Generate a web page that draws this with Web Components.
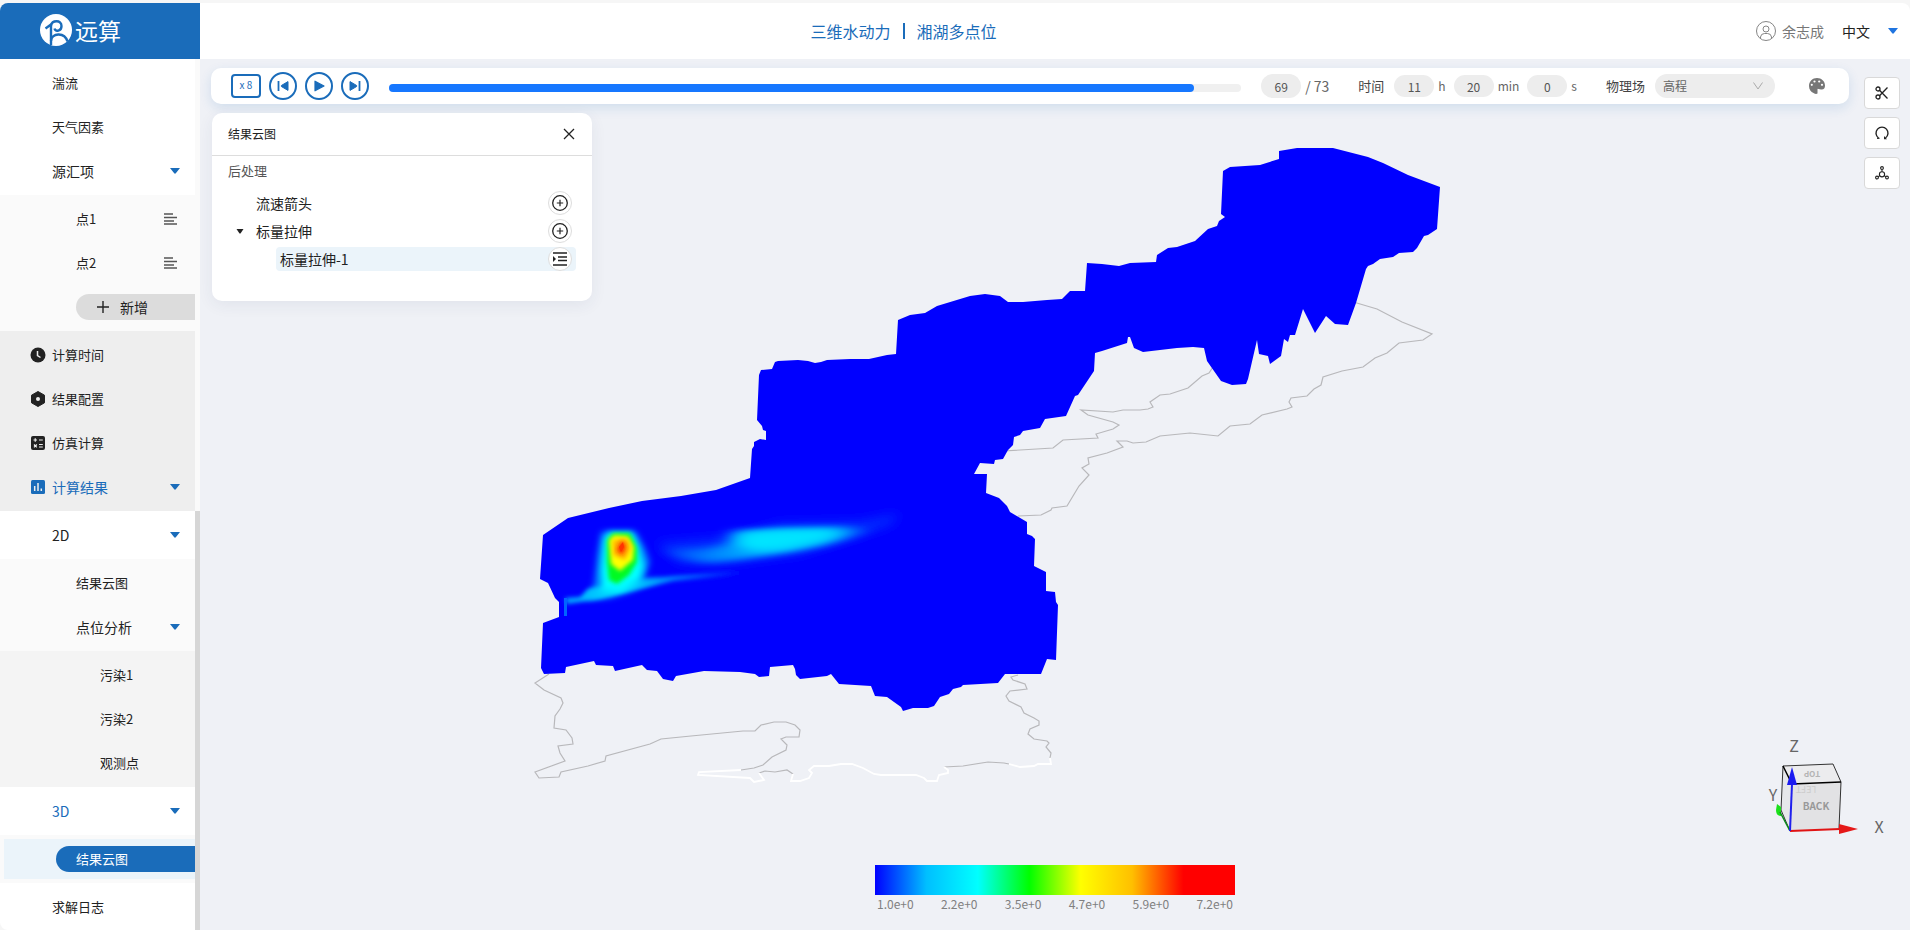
<!DOCTYPE html>
<html lang="zh-CN">
<head>
<meta charset="utf-8">
<title>三维水动力 | 湘湖多点位</title>
<style>
  html, body { margin: 0; height: 100%; }
  body {
    background: #f6f6f6; color: #222;
    font: 14px/20px "Noto Sans CJK SC", "Noto Sans", sans-serif;
    --brand: #1a6cba; --stage: #eff1f6; --tint: #ebf4fa; --pill: #ededed;
  }
</style>
</head>
<body>
<sim-app></sim-app>
<script>
const base = `
  :host, *, *::before, *::after { box-sizing: border-box; }
  button, input, select { font: inherit; color: inherit; margin: 0; padding: 0; border: 0; background: none; }
  button, select { cursor: pointer; }
  select { appearance: none; }
  a { color: inherit; text-decoration: none; }
  svg { display: block; }
`;
function define(name, html) {
  customElements.define(name, class extends HTMLElement {
    constructor() {
      super();
      this.attachShadow({ mode: 'open' });
    }
    connectedCallback() {
      if (this.shadowRoot.childNodes.length) return;
      const template = document.createElement('template');
      template.innerHTML = '<style>' + base + '</style>' + (typeof html === 'function' ? html(this) : html);
      this.shadowRoot.append(template.content.cloneNode(true));
    }
  });
}

/* ---------- icons ---------- */
const icons = {
  caret: ['0 0 10 6', '<path d="M0 0H10L6 5Q5 6.500 4 5Z" fill="currentColor"/>'],
  list: ['0 0 14 12', '<path d="M0 1H9M0 4.500H13M0 8H10M0 11H13" stroke="currentColor" stroke-width="1.300"/>'],
  plus: ['0 0 12 12', '<path d="M6 0V12M0 6H12" stroke="currentColor" stroke-width="1.400"/>'],
  close: ['0 0 12 12', '<path d="M1 1L11 11M11 1L1 11" stroke="currentColor" stroke-width="1.300"/>'],
  clock: ['0 0 16 16', '<circle cx="8" cy="8" r="7.500" fill="currentColor"/><path d="M7.500 4V8.500L10.500 10.500" fill="none" stroke="#eee" stroke-width="1.500"/>'],
  nut: ['0 0 16 16', '<path d="M8 .5L14.500 4.200V11.800L8 15.500L1.500 11.800V4.200Z" fill="currentColor" stroke="currentColor" stroke-linejoin="round"/><circle cx="8" cy="8" r="2" fill="#eee"/>'],
  calc: ['0 0 16 16', '<rect x="1" y="1" width="14" height="14" rx="2" fill="currentColor"/><path d="M3.500 5H7M5.250 3.300V6.700M9 5H12.800M9 9.500H12.800M9 12H12.800M4 9.500L6.800 12.300M6.800 9.500L4 12.300" stroke="#eee" stroke-width="1.200"/>'],
  chart: ['0 0 16 16', '<rect x="1" y="1" width="14" height="14" rx="1.500" fill="currentColor"/><path d="M4.700 7V12M8 4V12M11.300 9.500V12" stroke="#eee" stroke-width="1.500"/>'],
  prev: ['0 0 12 12', '<path d="M1.500 1V11" stroke="currentColor" stroke-width="1.800"/><path d="M11 1.600V10.400L4.500 6.600Q3.500 6 4.500 5.400Z" fill="currentColor" stroke="currentColor" stroke-linejoin="round"/>'],
  play: ['0 0 12 12', '<path d="M2 1.200L11 6L2 10.800Z" fill="currentColor" stroke="currentColor" stroke-width="1.200" stroke-linejoin="round"/>'],
  next: ['0 0 12 12', '<path d="M10.500 1V11" stroke="currentColor" stroke-width="1.800"/><path d="M1 1.600V10.400L7.500 6.600Q8.500 6 7.500 5.400Z" fill="currentColor" stroke="currentColor" stroke-linejoin="round"/>'],
  user: ['0 0 20 20', '<g fill="none" stroke="currentColor" stroke-width=".9"><circle cx="10" cy="10" r="9.500"/><circle cx="10" cy="8" r="3"/><path d="M4.500 17V16Q5 12.500 8.500 12.500H11.500Q15 12.500 15.500 16V17"/></g>'],
  add: ['0 0 16 16', '<circle cx="8" cy="8" r="7.300" fill="none" stroke="currentColor" stroke-width="1.300"/><path d="M8 4.800V11.200M4.800 8H11.200" stroke="currentColor" stroke-width="1.200"/>'],
  indent: ['0 0 16 16', '<path d="M1 2H15M6 6H15M6 9.500H15M1 14H15" stroke="currentColor" stroke-width="1.300"/><path d="M1 5L4 8L1 11Z" fill="currentColor"/>'],
  chevron: ['0 0 10 8', '<path d="M.5 .5L5 7L9.500 .5" fill="none" stroke="currentColor"/>'],
  palette: ['0 0 16 16', '<path d="M8 0C3.500 0 0 3.500 0 8C0 11.500 2 14 4.500 15Q7 16.500 8.500 15.500V11.500Q8.500 10.500 9.500 11L12 11.500Q16 12 16 7.500C16 3.300 12.500 0 8 0Z" fill="currentColor"/><g fill="#fff"><circle cx="2.800" cy="6.800" r="1.100"/><circle cx="5.500" cy="3.500" r="1.100"/><circle cx="10.200" cy="3.500" r="1.100"/><circle cx="13" cy="6.800" r="1.100"/></g>'],
  cut: ['0 0 14 14', '<g fill="none" stroke="currentColor" stroke-width="1.300"><circle cx="3" cy="3" r="2"/><circle cx="3" cy="11" r="2"/><path d="M4.500 4.300L12.500 12.500M4.500 9.700L12.500 1.500"/></g>'],
  rotate: ['0 0 14 14', '<path d="M3.500 12A6 6 0 1 1 10.500 12" fill="none" stroke="currentColor" stroke-width="1.400"/><path d="M9 10V13.300H12Z" fill="currentColor"/><path d="M2 12.300H4.500" fill="none" stroke="currentColor" stroke-width="1.200"/>'],
  nodes: ['0 0 14 14', '<g fill="none" stroke="currentColor" stroke-width="1.100"><circle cx="7" cy="8.300" r="2.600"/><circle cx="7" cy="2" r="1.400"/><circle cx="2" cy="11.500" r="1.400"/><circle cx="12" cy="11.500" r="1.400"/><path d="M7 3.400V5.700M3.200 10.700L4.800 9.600M10.800 10.700L9.200 9.600"/></g>'],
};
define('ui-icon', el => {
  const [box, body] = icons[el.getAttribute('name')];
  const [, , w, h] = box.split(' ');
  return `<style>:host { display: block; flex: none; }</style>
  <svg viewBox="${box}" width="${w}" height="${h}" aria-hidden="true">${body}</svg>`;
});

/* ---------- header ---------- */
define('brand-logo', `
<style>
  :host { display: flex; align-items: center; gap: 3px; width: 200px; height: 56px; padding: 0 0 2px 40px; background: var(--brand); color: #fff; font-size: 23px; line-height: 30px; }
</style>
<svg width="32" height="32" viewBox="0 0 32 32" aria-hidden="true">
  <circle cx="16" cy="16" r="16" fill="#fff"/>
  <g fill="none" stroke="#1a6cba" stroke-width="2.400" stroke-linejoin="round">
    <path d="M5.500 14.500L11 10.500V31"/>
    <path d="M11 11.500C12 6 21.500 5.500 21.500 12C21.500 17.500 15.500 18 14.500 14.500"/>
    <path d="M11 27C11.500 19 24.500 17.500 27.500 27.500"/>
  </g>
</svg>
<span>远算</span>`);

define('app-header', `
<style>
  :host { display: flex; align-items: center; height: 56px; padding-bottom: 1px; background: #fff; }
  h1 { flex: 1; margin: 0; display: flex; justify-content: center; gap: 12px; font-size: 16px; line-height: 24px; font-weight: 400; color: var(--brand); }
  .bar { width: 2px; height: 16px; align-self: center; background: var(--brand); }
  .right { flex: 0 0 303px; display: flex; justify-content: flex-end; align-items: center; padding-right: 12px; }
  .user { display: flex; align-items: center; gap: 6px; color: #777; margin-right: 18px; }
  label { display: grid; align-items: center; }
  label > * { grid-area: 1 / 1; }
  select { width: 56px; color: #222; }
  label ui-icon { justify-self: end; color: #1f74e0; pointer-events: none; }
</style>
<h1><span>三维水动力</span><i class="bar"></i><span>湘湖多点位</span></h1>
<div class="right">
  <a class="user" href="#user"><ui-icon name="user"></ui-icon><span>余志成</span></a>
  <label><select aria-label="语言"><option>中文</option></select><ui-icon name="caret"></ui-icon></label>
</div>`);

/* ---------- side menu ---------- */
define('menu-section', `
<style>
  :host { display: flow-root; }
  :host([tone="head"]) { background: #eee; }
  :host([tone="sub"]) { background: #fafafa; }
  :host([tone="deep"]) { background: #f4f4f4; }
</style><slot></slot>`);

define('menu-item', el => {
  const open = el.hasAttribute('expandable');
  const tag = open ? 'button' : 'a';
  return `
<style>
  :host { display: block; height: 40px; margin: 4px 0; font-size: 13px; }
  :host([expandable]) { font-size: 14px; }
  :host([current]) { color: var(--brand); }
  .row { display: flex; align-items: center; gap: 6px; width: 100%; height: 40px; padding: 0 15px 0 30px; text-align: left; }
  :host([level="2"]) .row { padding-left: 54px; }
  :host([level="3"]) .row { padding-left: 78px; }
  .icon { width: 16px; flex: none; }
  .label { flex: 1; }
  .caret { color: var(--brand); }
  .more { color: #555; padding-right: 2px; }
  :host([selected]) { margin-left: 4px; background: var(--tint); color: #fff; }
  :host([selected]) .row { padding: 7px 0 7px 52px; }
  :host([selected]) .icon { display: none; }
  :host([selected]) .label { height: 26px; line-height: 26px; padding-left: 20px; border-radius: 13px 0 0 13px; background: var(--brand); }
</style>
<${tag} class="row" ${open ? 'type="button" aria-expanded="true"' : 'href="#"'}>
  <span class="icon"><slot name="icon"></slot></span>
  <span class="label"><slot></slot></span>
  ${open ? '<ui-icon class="caret" name="caret"></ui-icon>' : ''}
  ${el.hasAttribute('more') ? '<ui-icon class="more" name="list"></ui-icon>' : ''}
</${tag}>`;
});

define('menu-add', `
<style>
  :host { display: block; height: 40px; margin: 4px 0; padding: 7px 0 7px 76px; }
  button { display: flex; align-items: center; gap: 11px; width: 100%; height: 26px; padding-left: 21px; border-radius: 13px 0 0 13px; background: #dcdcdc; }
</style>
<button type="button"><ui-icon name="plus"></ui-icon><span><slot></slot></span></button>`);

define('side-menu', `
<style>
  :host { display: flex; width: 200px; min-height: 0; overflow: hidden; background: #fff; border-radius: 0 0 0 8px; }
  nav { flex: 1; min-width: 0; }
  .track { width: 5px; display: grid; grid-template-rows: 452fr 419fr; background: #fafafa; }
  .track i { grid-row: 2; background: #d6d6d6; }
</style>
<nav>
  <menu-section>
    <menu-item>湍流</menu-item>
    <menu-item>天气因素</menu-item>
    <menu-item expandable>源汇项</menu-item>
    <menu-section tone="sub">
      <menu-item level="2" more>点1</menu-item>
      <menu-item level="2" more>点2</menu-item>
      <menu-add>新增</menu-add>
    </menu-section>
  </menu-section>
  <menu-section tone="head">
    <menu-item><ui-icon slot="icon" name="clock"></ui-icon>计算时间</menu-item>
    <menu-item><ui-icon slot="icon" name="nut"></ui-icon>结果配置</menu-item>
    <menu-item><ui-icon slot="icon" name="calc"></ui-icon>仿真计算</menu-item>
    <menu-item expandable current><ui-icon slot="icon" name="chart"></ui-icon>计算结果</menu-item>
  </menu-section>
  <menu-section>
    <menu-item expandable>2D</menu-item>
    <menu-section tone="sub">
      <menu-item level="2">结果云图</menu-item>
      <menu-item level="2" expandable>点位分析</menu-item>
      <menu-section tone="deep">
        <menu-item level="3">污染1</menu-item>
        <menu-item level="3">污染2</menu-item>
        <menu-item level="3">观测点</menu-item>
      </menu-section>
    </menu-section>
    <menu-item expandable current>3D</menu-item>
    <menu-section tone="sub">
      <menu-item level="2" selected>结果云图</menu-item>
    </menu-section>
    <menu-item>求解日志</menu-item>
  </menu-section>
</nav>
<div class="track"><i></i></div>`);

/* ---------- playback toolbar ---------- */
define('play-bar', `
<style>
  :host { display: flex; align-items: center; height: 36px; padding: 0 24px 0 20px; border-radius: 10px; background: #fff; color: #666; box-shadow: 0 4px 12px rgba(26, 108, 186, .14); }
  .controls { display: flex; align-items: center; gap: 8px; color: var(--brand); }
  .controls button { display: grid; place-items: center; width: 28px; height: 28px; border: 2px solid; border-radius: 50%; }
  .controls .speed { width: 30px; height: 24px; border-radius: 4px; font-size: 10px; line-height: 16px; padding-bottom: 2px; }
  .progress { flex: 1; padding: 4px 0 0; margin: 0 20px; }
  progress { appearance: none; display: block; width: 100%; height: 8px; border: 0; }
  progress::-webkit-progress-bar { background: #f0f0f0; border-radius: 4px; }
  progress::-webkit-progress-value { background: #1677ff; border-radius: 4px; }
  .set { display: flex; align-items: center; gap: 4px; }
  .set + .set { margin-left: 29px; }
  input { width: 40px; height: 22px; border-radius: 11px; background: var(--pill); text-align: center; font-size: 12px; color: #555; }
  .frame input { height: 24px; border-radius: 12px; }
  .cap { font-size: 13px; color: #444; margin-right: 6px; }
  .unit { font-size: 12px; margin-right: 4px; }
  .unit:last-child { margin-right: 0; }
  .field { display: grid; align-items: center; }
  .field > * { grid-area: 1 / 1; }
  select { width: 120px; height: 24px; padding: 0 8px; border-radius: 12px; background: var(--pill); font-size: 12px; color: #666; }
  .field ui-icon { justify-self: end; margin-right: 12px; color: #aaa; pointer-events: none; }
  .palette { margin-left: 34px; color: #777; }
</style>
<div class="controls">
  <button class="speed" type="button">x 8</button>
  <button type="button" aria-label="上一帧"><ui-icon name="prev"></ui-icon></button>
  <button type="button" aria-label="播放"><ui-icon name="play"></ui-icon></button>
  <button type="button" aria-label="下一帧"><ui-icon name="next"></ui-icon></button>
</div>
<div class="progress"><progress max="73" value="69" aria-label="播放进度"></progress></div>
<div class="set frame"><input value="69" aria-label="当前帧"><span>/ 73</span></div>
<div class="set">
  <span class="cap">时间</span>
  <input id="h" value="11"><label class="unit" for="h">h</label>
  <input id="m" value="20"><label class="unit" for="m">min</label>
  <input id="s" value="0"><label class="unit" for="s">s</label>
</div>
<div class="set">
  <label class="cap" for="field">物理场</label>
  <span class="field"><select id="field"><option>高程</option></select><ui-icon name="chevron"></ui-icon></span>
</div>
<button class="palette" type="button" aria-label="配色"><ui-icon name="palette"></ui-icon></button>`);

define('tool-rail', `
<style>
  :host { display: flex; flex-direction: column; gap: 8px; width: 36px; }
  button { display: grid; place-items: center; height: 32px; border: 1px solid #d9d9d9; border-radius: 4px; background: #fff; }
</style>
<button type="button" aria-label="剖切"><ui-icon name="cut"></ui-icon></button>
<button type="button" aria-label="重置视角"><ui-icon name="rotate"></ui-icon></button>
<button type="button" aria-label="坐标轴"><ui-icon name="nodes"></ui-icon></button>`);

/* ---------- result panel ---------- */
define('tree-row', el => `
<style>
  :host { display: flex; align-items: center; height: 24px; padding: 0 4px 0 8px; margin-bottom: 4px; }
  :host([level="2"]) { margin-left: 48px; padding-left: 4px; border-radius: 4px; background: var(--tint); }
  .toggle { width: 20px; flex: none; }
  .toggle.blank { visibility: hidden; }
  .label { flex: 1; }
  .act { display: grid; place-items: center; width: 24px; height: 24px; border: 1px solid #ddd; border-radius: 50%; background: #fff; }
</style>
${el.getAttribute('level') === '2' ? '' : `<button class="toggle ${el.hasAttribute('open') ? '' : 'blank'}" type="button" aria-label="展开"><svg width="8" height="5" viewBox="0 0 8 5"><path d="M.5 0H7.500L4.500 4.500H3.500Z" fill="currentColor"/></svg></button>`}
<span class="label"><slot></slot></span>
<button class="act" type="button" aria-label="操作"><ui-icon name="${el.getAttribute('action')}"></ui-icon></button>`);

define('result-panel', `
<style>
  :host { display: block; width: 380px; height: 188px; border-radius: 10px; background: #fff; box-shadow: 0 4px 16px rgba(40, 60, 100, .07); }
  header { display: flex; align-items: center; justify-content: space-between; height: 43px; padding: 0 17px 0 16px; border-bottom: 1px solid #ddd; }
  h2 { margin: 0; font-size: 12px; line-height: 20px; font-weight: 400; }
  .body { padding: 5px 16px; }
  h3 { margin: 0 0 10px; font-size: 13px; line-height: 20px; font-weight: 400; color: #555; }
</style>
<header><h2>结果云图</h2><button type="button" aria-label="关闭"><ui-icon name="close"></ui-icon></button></header>
<div class="body">
  <h3>后处理</h3>
  <tree-row action="add">流速箭头</tree-row>
  <tree-row action="add" open>标量拉伸</tree-row>
  <tree-row action="indent" level="2">标量拉伸-1</tree-row>
</div>`);

/* ---------- 3D scene ---------- */
define('flow-scene', `
<style>
  :host { display: block; min-width: 0; min-height: 0; }
  svg { width: 100%; height: 100%; }
</style>
<svg viewBox="200 59 1710 871" role="img" aria-label="高程云图">
  <defs>
    <path id="lake" d="M750 478L752 449L754 446L754 442L760 439L766 440L766 431L763 430L762 426L757 420L759 375L761 370L772 369L775 362L778 361L798 360L808 361L815 363L821 362L827 360L850 359L869 359L887 355L896 354L898 320L910 315L925 313L937 306L970 296L985 294L1000 296L1008 302L1023 302L1047 300L1062 299L1070 291L1085 291L1087 263L1102 264L1119 266L1130 263L1156 262L1157 255L1168 248L1177 247L1195 241L1208 229L1217 226L1219 221L1225 217L1221 214L1223 171L1230 167L1260 165L1279 159L1279 151L1297 148L1333 148L1368 157L1383 163L1408 175L1440 187L1437 229L1428 235L1424 236L1417 248L1413 252L1399 253L1393 257L1380 259L1373 264L1368 266L1366 269L1356 303L1348 325L1335 324L1326 316L1315 333L1303 309L1295 335L1290 335L1288 342L1284 339L1281 356L1270 364L1268 356L1259 354L1257 340L1248 379L1246 384L1232 385L1221 381L1207 361L1204 348L1193 347L1177 348L1143 352L1134 348L1130 337L1128 337L1127 343L1102 351L1095 353L1094 371L1078 395L1075 396L1066 416L1045 419L1040 428L1023 431L1020 435L1014 437L1013 445L1008 450L1003 459L995 460L994 464L980 463L974 474L987 474L986 493L999 498L1007 506L1010 512L1027 522L1027 534L1032 536L1035 539L1034 566L1046 572L1046 591L1055 592L1056 602L1058 605L1056 660L1047 659L1041 674L1005 674L998 683L963 685L961 687L953 689L949 694L940 697L934 706L928 708L913 708L903 711L901 707L887 697L875 696L871 686L839 684L831 674L827 676L800 679L796 675L795 669L793 665L770 667L769 676L759 677L755 674L740 672L704 671L676 676L673 681L663 679L657 671L647 670L642 665L615 671L613 666L596 665L594 661L566 667L565 673L544 674L541 668L543 623L559 617L559 602L555 598L548 583L540 579L543 535L568 518L609 508L642 501L681 496L716 490Z"/>
    <clipPath id="clip"><use href="#lake"/></clipPath>
    <filter id="b2" x="-30%" y="-30%" width="160%" height="160%"><feGaussianBlur stdDeviation="2"/></filter>
    <filter id="b3" x="-30%" y="-30%" width="160%" height="160%"><feGaussianBlur stdDeviation="3"/></filter>
    <filter id="b5" x="-30%" y="-50%" width="160%" height="200%"><feGaussianBlur stdDeviation="6"/></filter>
    <filter id="soft" x="-30%" y="-50%" width="160%" height="200%"><feGaussianBlur stdDeviation="9 3"/></filter>
    <linearGradient id="tail" x1="565" x2="745" y1="0" y2="0" gradientUnits="userSpaceOnUse">
      <stop offset="0" stop-color="#00a0ff"/><stop offset=".3" stop-color="#00e4ff"/><stop offset=".55" stop-color="#0090ff"/><stop offset="1" stop-color="#00f"/>
    </linearGradient>
    <linearGradient id="plume" x1="655" x2="875" y1="0" y2="0" gradientUnits="userSpaceOnUse">
      <stop offset="0" stop-color="#0030ff"/><stop offset=".25" stop-color="#0080ff"/><stop offset=".5" stop-color="#00c0ff"/><stop offset=".8" stop-color="#00c8ff"/><stop offset="1" stop-color="#03f"/>
    </linearGradient>
  </defs>
  <g fill="none" stroke="#b8b8bb" stroke-width="1.200">
    <path d="M549 674L535 683L544 690L561 698L563 703L560 709L555 716L554 728L566 730L572 738L573 744L558 746L560 753L565 761L535 772L539 778L559 777L561 772L588 766L605 761L606 756L650 744L661 739L691 736L743 731L755 731L761 725L774 722L786 722L795 725L800 730L799 737L786 737L781 739L787 745L786 750L772 757L763 765L754 768L741 770M759 773L765 771L775 772L787 770L793 774M944 767L963 766L988 762L1004 763L1009 764M1050 758L1051 753L1046 747L1049 743L1047 741L1034 739L1028 734L1030 729L1039 725L1039 721L1034 718L1024 713L1021 707L1009 701L1006 696L1010 691L1027 689L1025 684L1013 680L1011 677L1018 675"/>
    <path d="M1018 516L1041 515L1051 510L1052 508L1067 506L1079 486L1089 475L1082 468L1089 464L1088 458L1107 453L1123 447L1117 441L1127 441L1133 443L1146 442L1160 436L1190 433L1218 436L1230 426L1250 424L1262 415L1287 409L1292 407L1289 402L1291 398L1307 396L1314 389L1321 385L1323 377L1342 371L1363 367L1375 358L1387 353L1399 343L1423 340L1432 334L1402 322L1377 309L1350 301"/>
    <path d="M1004 451L1053 448L1063 440L1098 438L1096 434L1113 429L1119 425L1113 422L1088 415L1081 410L1113 412L1123 410L1140 410L1148 409L1153 407L1150 402L1160 395L1170 394L1188 388L1202 376L1209 373L1213 367"/>
  </g>
  <path fill="none" stroke="#fff" stroke-width="1.800" d="M741 770L699 772L698 775L750 778L754 782L764 780L759 773M793 774L791 781L800 781L809 778L812 773L809 770L814 766L829 766L841 764L852 764L863 768L874 774L881 775L916 775L924 778L927 781L937 781L939 775L948 773L948 770L944 767M1009 764L1020 767L1034 766L1038 764L1051 764L1050 758"/>
  <use href="#lake" fill="#00f"/>
  <g clip-path="url(#clip)">
    <path d="M656 544L730 538L780 524L860 522L900 514L890 524L850 538L800 553L720 564L680 562Z" fill="#0030ff" filter="url(#b5)"/>
    <path d="M668 550L706 549L728 544L732 531L784 528L840 527L866 529L850 537L820 546L784 553L735 560L706 563L684 559Z" fill="url(#plume)" filter="url(#soft)"/>
    <path d="M742 533L784 531L838 531L822 539L786 548L752 550L738 545Z" fill="#00e4ff" filter="url(#soft)"/>
    <path d="M586 600L594 584L597 556L601 532L636 532L645 548L650 562L644 580L662 578L630 592L610 598Z" fill="#0080ff" filter="url(#b3)"/>
    <path d="M565 598L580 597L588 589L627 581L673 576L745 570L745 574L673 581L627 592L600 599L567 604Z" fill="url(#tail)" filter="url(#b2)"/>
    <path d="M602 590L601 570L604 540L608 532L632 532L639 548L644 566L640 580L622 590Z" fill="#0ff" filter="url(#b3)"/>
    <path d="M564 598H567V616H564Z" fill="#0066ff"/>
    <path d="M609 580L607 562L607 540L613 533L630 533L637 548L637 562L629 575L617 584Z" fill="#00fa20" filter="url(#b2)"/>
    <path d="M611 564L609 540L614 535L628 536L634 547L633 560L620 571Z" fill="#ff0" filter="url(#b2)"/>
    <path d="M613 555L613 540L628 539L631 548L625 560Z" fill="#ffb400" filter="url(#b2)"/>
    <path d="M617 550L622 540L626 547L622 555Z" fill="#ff2000" filter="url(#b2)"/>
    <path d="M619 547L623 542L624 547L621 552Z" fill="#f30"/>
  </g>
</svg>`);

define('axis-gizmo', `
<style>:host { display: block; width: 140px; height: 130px; font-size: 16px; }</style>
<svg width="140" height="130" viewBox="1755 720 140 130" aria-label="视角方向">
  <path d="M1783 766L1833 764L1841 782L1839 828L1790 831L1781 810Z" fill="#e6e7ea"/>
  <path d="M1792 784L1841 782L1839 828L1790 831Z" fill="#e2e2e4"/>
  <path d="M1783 766L1833 764L1841 782L1792 784Z" fill="#ececee"/>
  <text x="-1812" y="-771" transform="rotate(180)" text-anchor="middle" font-size="8" font-weight="700" fill="#b4b4b4">TOP</text>
  <text x="-1806" y="-786" transform="rotate(180)" text-anchor="middle" font-size="9" fill="#ccc">LEFT</text>
  <path d="M1783 766L1833 764M1833 764L1841 782L1839 828M1783 766L1781 810L1790 831" fill="none" stroke="#333" stroke-width="1"/>
  <path d="M1783 766L1792 784L1841 782" fill="none" stroke="#000" stroke-width="1.500"/>
  <text x="1816" y="810" text-anchor="middle" font-size="10" font-weight="700" fill="#999">BACK</text>
  <path d="M1777 804L1781 807V816Q1776 816 1776 810Z" fill="#1be01b"/>
  <path d="M1790 831L1780 812" stroke="#0a8a1a" stroke-width="1.500"/>
  <path d="M1790 831L1840 829" stroke="#e01414" stroke-width="2"/>
  <path d="M1839 824L1858 829L1839 834Z" fill="#e51818"/>
  <path d="M1790 831L1792 784" stroke="#2020ee" stroke-width="2"/>
  <path d="M1792 767L1797 785H1787Z" fill="#1a1af0"/>
  <g fill="#666" text-anchor="middle"><text x="1794" y="752">Z</text><text x="1773" y="801">Y</text><text x="1879" y="833">X</text></g>
</svg>`);

define('color-legend', `
<style>
  :host { display: block; width: 360px; color: #808080; font-size: 12px; line-height: 18px; }
  .bar { height: 30px; background: linear-gradient(90deg, #00f, #00bfff, #0ff, #0f0, #ff0, #ffbf00, #f00, #f00); }
  .ticks { display: flex; justify-content: space-between; padding: 0 2px; }
</style>
<div class="bar"></div>
<div class="ticks"><span>1.0e+0</span><span>2.2e+0</span><span>3.5e+0</span><span>4.7e+0</span><span>5.9e+0</span><span>7.2e+0</span></div>`);

define('result-stage', `
<style>
  :host { display: grid; grid-template: minmax(0, 1fr) / minmax(0, 1fr); min-width: 0; min-height: 0; background: var(--stage); }
  flow-scene, .overlay { grid-area: 1 / 1; }
  .overlay { display: flex; flex-direction: column; justify-content: space-between; }
  .top { display: flex; gap: 15px; padding: 9px 10px 0 11px; }
  .left { flex: 1; min-width: 0; }
  .below { padding: 9px 1px 0; }
  .rail { padding-top: 9px; }
  .bottom { display: grid; grid-template-columns: 1fr auto 1fr; align-items: end; }
  color-legend { grid-column: 2; padding-bottom: 17px; }
  axis-gizmo { justify-self: end; margin: 0 15px 80px 0; }
</style>
<flow-scene></flow-scene>
<div class="overlay">
  <div class="top">
    <div class="left">
      <play-bar></play-bar>
      <div class="below"><result-panel></result-panel></div>
    </div>
    <div class="rail"><tool-rail></tool-rail></div>
  </div>
  <div class="bottom"><color-legend></color-legend><axis-gizmo></axis-gizmo></div>
</div>`);

define('sim-app', `
<style>
  :host { display: grid; grid-template: 56px minmax(0, 1fr) / 200px minmax(0, 1fr); height: 100vh; padding-top: 3px; }
  brand-logo { border-top-left-radius: 8px; }
  app-header { border-top-right-radius: 8px; }
</style>
<brand-logo></brand-logo>
<app-header></app-header>
<side-menu></side-menu>
<result-stage></result-stage>`);
</script>
</body>
</html>
